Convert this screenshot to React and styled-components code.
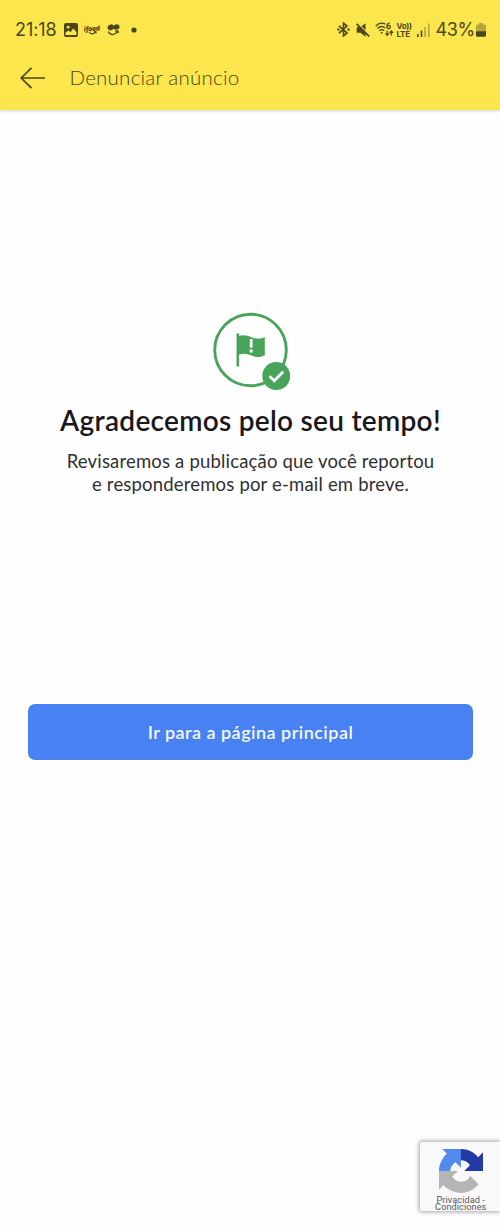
import React from "react";
import styled, { createGlobalStyle } from "styled-components";

const GlobalStyle = createGlobalStyle`
  * { box-sizing: border-box; }
  body { margin: 0; background: #fff; }
`;

const Screen = styled.div`
  display: flex;
  flex-direction: column;
  height: 1227px;
  overflow: hidden;
  background: #fefefe;
  font-family: Lato, "Liberation Sans", sans-serif;
`;

const Header = styled.header`
  flex: none;
  height: 110px;
  background: #fbe64d;
  box-shadow: 0 1px 3px rgba(0, 0, 0, 0.18);
  color: #4b4519;
`;

const StatusBar = styled.div`
  display: flex;
  justify-content: space-between;
  height: 59px;
  padding: 0 14px 0 15px;
`;

const StatusGroup = styled.div`
  display: flex;
  align-items: center;
`;

const StatusText = styled.span`
  font: 370 18px/20px Inter, sans-serif;
  letter-spacing: ${(p) => p.$spacing};
  width: ${(p) => p.$width};
  white-space: nowrap;
`;

const Percent = styled(StatusText)`
  margin-left: 6px;
`;

const Glyph = styled.svg`
  display: block;
  flex: none;
  margin-left: ${(p) => p.$gap || 0}px;
`;

const NavBar = styled.div`
  display: flex;
  align-items: center;
  height: 38px;
  padding-left: 20px;
`;

const Title = styled.h1`
  margin: -2px 0 0 23.5px;
  font-size: 20.5px;
  line-height: 26px;
  font-weight: 300;
  letter-spacing: 0.24px;
`;

const Content = styled.main`
  display: flex;
  flex-direction: column;
  align-items: center;
  padding: 201px 27px 0 28px;
  text-align: center;
`;

const Heading = styled.h2`
  margin: 11px 0 0;
  font-size: 28px;
  line-height: 36px;
  font-weight: 600;
  letter-spacing: 0.28px;
  color: #18181a;
  white-space: nowrap;
`;

const Message = styled.p`
  margin: 12px 0 0;
  font-size: 18.5px;
  line-height: 23px;
  letter-spacing: 0.18px;
  color: #303033;
  white-space: nowrap;
`;

const PrimaryButton = styled.button`
  width: 445px;
  height: 56px;
  margin-top: 208px;
  padding: 0;
  border: 0;
  border-radius: 7px;
  background: #4881f1;
  color: #f4f8ff;
  font: 600 18px/24px Lato, sans-serif;
  letter-spacing: 0.47px;
`;

const CaptchaBadge = styled.aside`
  position: absolute;
  top: 1142px;
  right: 0;
  width: 80px;
  height: 69px;
  padding: 6.5px 0 0 1.5px;
  display: flex;
  flex-direction: column;
  align-items: center;
  border-radius: 2px 0 0 2px;
  background: #f9f9f9;
  box-shadow: 0 0 4px 1px rgba(0, 0, 0, 0.36);
`;

const CaptchaText = styled.div`
  margin-top: 4px;
  font: 400 9.1px/7px Roboto, sans-serif;
  letter-spacing: 0.1px;
  color: #555;
  text-align: center;
  white-space: nowrap;
`;

const Page = styled.div`
  position: relative;
  width: 500px;
`;

const PhotoIcon = () => (
  <Glyph $gap={8} width="14" height="14" viewBox="0 0 14 14">
    <rect width="14" height="14" rx="2" fill="currentColor" />
    <circle cx="4.1" cy="4.2" r="1.4" fill="#fbe64d" />
    <path d="M1.5 11.9V9.5l3-2 2 1.8 2.7-3.8 3.3 3.4v3Z" fill="#fbe64d" />
  </Glyph>
);

const DeliveryIcon = () => (
  <Glyph $gap={6} width="17" height="12" viewBox="0 0 17 12">
    <text
      x="0"
      y="7"
      transform="rotate(-4 8 6)"
      textLength="16"
      lengthAdjust="spacingAndGlyphs"
      fill="currentColor"
      fontFamily="Inter, sans-serif"
      fontSize="7"
      fontWeight="900"
      fontStyle="italic"
    >
      ifood
    </text>
    <path d="M5 8.2c2.2 2.6 4.8 2 6.6-.4M9.9 7.7l2-.2.3 1.8" fill="none" stroke="currentColor" strokeWidth="1.1" />
  </Glyph>
);

const SmileIcon = () => (
  <Glyph $gap={6} width="13" height="12" viewBox="0 0 13 12">
    <ellipse cx="3.8" cy="3.3" rx="3.2" ry="2.8" transform="rotate(-20 3.8 3.3)" fill="currentColor" />
    <ellipse cx="9.4" cy="3" rx="3.2" ry="2.7" transform="rotate(-20 9.4 3)" fill="currentColor" />
    <path d="M1.2 7.5c2.2 4 6.6 4 9.2.2M8.2 7.2l2.7-.2.2 2.2" fill="none" stroke="currentColor" strokeWidth="1.3" />
  </Glyph>
);

const DotIcon = () => (
  <Glyph $gap={11} width="6" height="6" viewBox="0 0 6 6">
    <circle cx="3" cy="3" r="2.6" fill="currentColor" />
  </Glyph>
);

const BluetoothIcon = () => (
  <Glyph width="13" height="15" viewBox="0 0 13 15" fill="none" stroke="currentColor" strokeWidth="1.6">
    <path d="m2 3.8 8 7.1-3.5 3V1.1l3.5 3-8 7.1" />
    <path d="M.3 7.5h2.3M10.4 7.5h2.3" strokeWidth="1.9" />
  </Glyph>
);

const MutedIcon = () => (
  <Glyph $gap={6} width="14" height="14" viewBox="0 0 14 14">
    <path d="M.7 4.3h3.6L9.5.2v13.5L4.5 9.8H.7Z" fill="currentColor" />
    <path d="M1.8.5 14 12.7" stroke="#fbe64d" strokeWidth="1.3" />
    <path d="m.6.8 12.5 12.5" stroke="currentColor" strokeWidth="1.8" />
  </Glyph>
);

const WifiIcon = () => (
  <Glyph $gap={5} width="19" height="15" viewBox="0 0 19 15" fill="none" stroke="currentColor">
    <path d="M.7 4.2C3.6 1 7.6.8 10.3 2.2M2.5 6.5c2.3-2.3 5.3-2.4 7.8-.4M4.4 8.7c1.3-1.3 3.3-1.3 4.7 0" strokeWidth="1.3" />
    <path d="M5.2 10.2h3l-1.5 1.9Z" fill="currentColor" stroke="none" />
    <path d="M14.6 1.2c-2 .3-2.8 1.7-2.6 3.6" strokeWidth="1.2" />
    <circle cx="13.7" cy="5" r="1.7" strokeWidth="1.2" />
    <path d="M12.2 8.5v4.8m-1.7-2 1.7 2 1.7-2M16.3 13.6V9m-1.7 2 1.7-2 1.7 2" strokeWidth="1.2" />
  </Glyph>
);

const VolteLabel = styled.span`
  display: flex;
  flex-direction: column;
  width: 15px;
  margin-left: 3px;
  font: 700 8px/8px Inter, sans-serif;
  letter-spacing: -0.25px;
  white-space: nowrap;
`;

const SignalIcon = () => (
  <Glyph $gap={5} width="13" height="14" viewBox="0 0 13 14" fill="currentColor">
    <path d="M0 11h1.6v3H0ZM3.7 7.5h1.6V14H3.7Z" />
    <path d="M7.3 4h1.6v10H7.3ZM11 .5h1.6V14H11Z" opacity=".4" />
  </Glyph>
);

const BatteryIcon = () => (
  <Glyph width="10" height="14" viewBox="0 0 10 14" fill="currentColor">
    <path d="M3 0h4v1.4h1.5Q10 1.4 10 3v5.5H0V3q0-1.6 1.5-1.6H3Z" opacity=".4" />
    <path d="M0 8.3h10v3.9q0 1.5-1.5 1.5h-7Q0 13.7 0 12.2Z" />
  </Glyph>
);

const BackIcon = () => (
  <Glyph width="26" height="22" viewBox="0 0 26 22" fill="none" stroke="currentColor" strokeWidth="1.7">
    <path d="M25 11H1.2M11.5.8 1.2 11l10.3 10.2" />
  </Glyph>
);

const ReportedIcon = () => (
  <Glyph width="79" height="80" viewBox="0 0 79 80">
    <circle cx="39.5" cy="39" r="35.8" fill="none" stroke="#48a45a" strokeWidth="2.9" />
    <path d="M26.8 23.5v31" stroke="#48a45a" strokeWidth="2.5" strokeLinecap="round" />
    <path d="M27 25.2c4.4-1.8 8.6-1.2 13 .8 5 2.2 9.3 2.1 13.8 0v18.2c-4.8 2.5-9.3 2.5-14 .1-4.2-2-8.6-2-12.8-.2Z" fill="#48a45a" />
    <path d="M40.2 28v8.6" stroke="#fff" strokeWidth="2.8" />
    <circle cx="40.2" cy="40" r="1.7" fill="#fff" />
    <circle cx="65.3" cy="65" r="14" fill="#48a45a" />
    <path d="m58.5 65.2 4.8 4.6 8.9-9" fill="none" stroke="#fff" strokeWidth="2.8" />
  </Glyph>
);

const CaptchaLogo = () => (
  <Glyph width="44" height="44" viewBox="0 0 64 64">
    <path fill="#2339a8" d="M64 31.955V4.687l-7.16 7.16C50.948 4.674 42.033.093 32.05.093c-10.4 0-19.622 4.96-25.458 12.64l11.736 11.86a15.55 15.55 0 0 1 4.754-5.334c2.05-1.6 4.952-2.906 8.968-2.906.485 0 .86.057 1.135.163 4.976.393 9.288 3.14 11.828 7.124l-8.307 8.307L64 31.953" />
    <path fill="#528af0" d="M31.862.094H4.594l7.16 7.16C4.58 13.147 0 22.06 0 32.046c0 10.4 4.96 19.622 12.64 25.458L24.5 45.768a15.55 15.55 0 0 1-5.334-4.754c-1.6-2.05-2.906-4.952-2.906-8.968 0-.485.057-.86.163-1.135.393-4.976 3.14-9.288 7.124-11.828l8.307 8.307Z" />
    <path fill="#b5b5b5" d="M0 32.045v27.268l7.16-7.16c5.86 7.173 14.774 11.754 24.76 11.754 10.4 0 19.622-4.96 25.458-12.64l-11.736-11.86a15.55 15.55 0 0 1-4.754 5.334c-2.05 1.6-4.952 2.906-8.968 2.906-.485 0-.86-.057-1.135-.163-4.976-.393-9.288-3.14-11.828-7.124l8.307-8.307Z" />
  </Glyph>
);

export default function App() {
  return (
    <Page>
      <GlobalStyle />
      <Screen>
        <Header>
          <StatusBar>
            <StatusGroup>
              <StatusText $width="41px" $spacing="-0.05px">21:18</StatusText>
              <PhotoIcon />
              <DeliveryIcon />
              <SmileIcon />
              <DotIcon />
            </StatusGroup>
            <StatusGroup>
              <BluetoothIcon />
              <MutedIcon />
              <WifiIcon />
              <VolteLabel><span>Vo))</span><span>LTE</span></VolteLabel>
              <SignalIcon />
              <Percent $width="40.5px" $spacing="-0.4px">43%</Percent>
              <BatteryIcon />
            </StatusGroup>
          </StatusBar>
          <NavBar>
            <BackIcon />
            <Title>Denunciar anúncio</Title>
          </NavBar>
        </Header>
        <Content>
          <ReportedIcon />
          <Heading>Agradecemos pelo seu tempo!</Heading>
          <Message>
            Revisaremos a publicação que você reportou
            <br />e responderemos por e-mail em breve.
          </Message>
          <PrimaryButton>Ir para a página principal</PrimaryButton>
        </Content>
      </Screen>
      <CaptchaBadge>
        <CaptchaLogo />
        <CaptchaText>
          Privacidad -<br />Condiciones
        </CaptchaText>
      </CaptchaBadge>
    </Page>
  );
}
